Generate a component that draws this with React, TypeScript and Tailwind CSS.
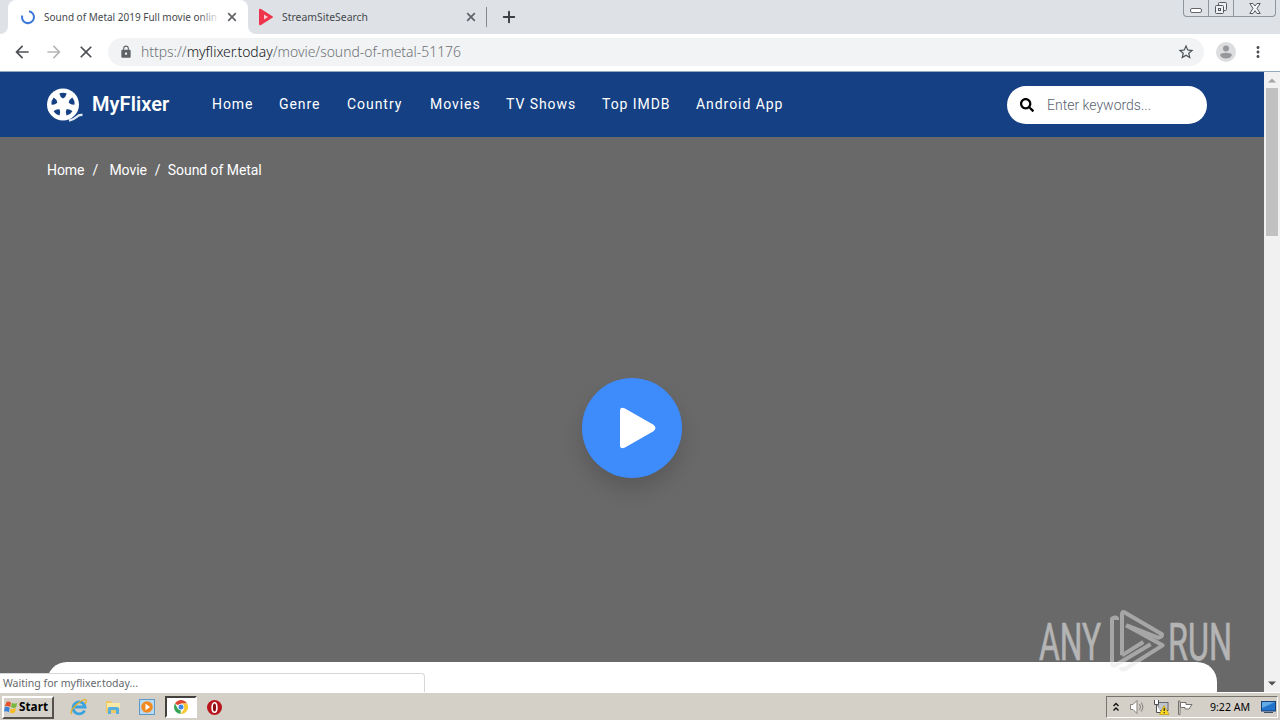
import type { ReactNode } from "react"
import { Plus } from "lucide-react"
import { FaSearch } from "react-icons/fa"
import { MdArrowBack, MdArrowForward, MdClose, MdLock, MdMoreVert, MdStarBorder } from "react-icons/md"

const navItems = [
    { label: "Home", width: "w-[67px]" },
    { label: "Genre", width: "w-[68px]" },
    { label: "Country", width: "w-[83px]" },
    { label: "Movies", width: "w-[76px]" },
    { label: "TV Shows", width: "w-[96px]" },
    { label: "Top IMDB", width: "w-[94px]" },
    { label: "Android App", width: "w-[100px]" }
]

function Label({ text, width, size, className = "" }: { text: string; width: number; size: number; className?: string }) {
    // Keeps system labels at a fixed advance width
    return (
        <svg width={width + 4} height="18" className={`shrink-0 overflow-visible ${className}`}>
            <text x="0" y="13" fontSize={size} textLength={width} lengthAdjust="spacingAndGlyphs" fill="currentColor">
                {text}
            </text>
        </svg>
    )
}

// Small bold cross on the tabs
function TabClose() {
    return (
        <svg width="14" height="14" viewBox="0 0 14 14" className="shrink-0">
            <path d="M3.2 3.2L10.8 10.8M10.8 3.2L3.2 10.8" stroke="#5f6368" strokeWidth="1.7" />
        </svg>
    )
}

function TabStrip() {
    return (
        <div className="flex h-[34px] bg-[#dee1e6]">
            <div className="w-2 h-full bg-white">
                <div className="size-full rounded-br-lg bg-[#dee1e6]"></div>
            </div>
            <div className="flex w-[240px] items-center rounded-t-lg bg-white pl-3">
                <svg width="16" height="16" viewBox="0 0 16 16" className="shrink-0">
                    <path d="M9 2.2A6 6 0 1 1 2.2 6.5" fill="none" stroke="#3c78d8" strokeWidth="2" />
                </svg>
                <div className="relative ml-2 w-[180px] text-[#45494d]">
                    <Label text="Sound of Metal 2019 Full movie onlin" width={173} size={11} />
                    <div className="absolute inset-y-0 right-[6px] w-5 bg-linear-to-r from-transparent to-white/90"></div>
                </div>
                <div className="ml-px">
                    <TabClose />
                </div>
            </div>
            <div className="h-full w-2 bg-white">
                <div className="size-full rounded-bl-lg bg-[#dee1e6]"></div>
            </div>
            <div className="flex w-[230px] items-center pl-[2px]">
                <svg width="16" height="18" viewBox="0 0 16 18">
                    <path d="M1 2Q1 0 3 1L14 8Q16 9 14 10L3 17Q1 18 1 16Z" fill="#ee344c" />
                    <path d="M6 6.5L10 9L6 11.5Z" fill="#ffc8ce" />
                </svg>
                <div className="ml-2 w-[182px] text-[#45494d]">
                    <Label text="StreamSiteSearch" width={86} size={11} />
                </div>
                <TabClose />
            </div>
            <div className="mt-[7px] h-5 w-px bg-[#85888c]"></div>
            <Plus className="mt-2 ml-[13px] size-[18px] text-[#3c4043]" strokeWidth={2.6} />
            <div className="mr-1 ml-auto flex h-[17px] w-[93px] rounded-b-[4px] border border-t-0 border-[#8f959c] text-[#55595f]">
                <div className="flex w-[25px] items-end justify-center border-r border-[#8f959c] pb-[3px]">
                    <div className="h-[5px] w-[12px] rounded-[2px] border border-[#63676d] bg-white"></div>
                </div>
                <div className="flex w-[25px] items-center justify-center border-r border-[#8f959c]">
                    <svg width="14" height="14" viewBox="0 0 14 14" fill="#eef0f3" stroke="currentColor">
                        <rect x="4.5" y="1.5" width="8" height="8" rx="1" />
                        <rect x="1.5" y="4.5" width="8" height="8" rx="1" />
                        <rect x="4.5" y="7.5" width="2" height="2" />
                    </svg>
                </div>
                <div className="flex flex-1 items-center justify-center">
                    <svg width="12" height="11" viewBox="0 0 12 11" fill="#f6f7f8" stroke="currentColor">
                        <path d="M.8.5H4L6 3L8 .5H11.2L8 5.4L11.2 10.5H8L6 7.7L4 10.5H.8L4 5.4Z" />
                    </svg>
                </div>
            </div>
        </div>
    )
}

function Toolbar() {
    return (
        <div className="flex h-[38px] items-center border-b border-[#93a9c2] bg-white pb-px">
            <MdArrowBack className="ml-3 size-5 text-[#4d5156]" />
            <MdArrowForward className="ml-3 size-5 text-[#b6b8ba]" />
            <MdClose className="ml-3 size-5 text-[#4d5156]" />
            <div className="ml-3 flex h-7 w-[1096px] items-center rounded-full bg-[#f1f3f4] pl-[11px]">
                <MdLock className="size-[14px] shrink-0 text-[#5f6368]" />
                <svg width="324" height="20" className="ml-2 shrink-0 overflow-visible">
                    <text x="0" y="15" fontSize="14" fontWeight="300" textLength="320" lengthAdjust="spacingAndGlyphs" fill="#6d7277">
                        https://<tspan fill="#15171a">myflixer.today</tspan>/movie/sound-of-metal-51176
                    </text>
                </svg>
                <MdStarBorder className="mr-[9px] ml-auto size-[18px] text-[#4d5156]" />
            </div>
            <svg width="20" height="20" viewBox="0 0 20 20" className="ml-3">
                <circle cx="10" cy="10" r="10" fill="#dcdddf" />
                <circle cx="10" cy="6.4" r="3" fill="#96989b" />
                <path d="M4 13Q5 10.8 10 10.8Q15 10.8 16 13Q14.5 16.6 10 16.6Q5.5 16.6 4 13Z" fill="#96989b" />
            </svg>
            <MdMoreVert className="ml-[13px] size-[18px] text-[#4d5156]" />
        </div>
    )
}

function ReelLogo() {
    const holes = [-90, -18, 54, 126, 198]
    return (
        <svg width="36" height="34" viewBox="0 0 36 34" className="shrink-0">
            <circle cx="16" cy="16.5" r="16" fill="#fff" />
            <path d="M22 32.5Q27 31.5 29.5 29T35.500 27" fill="none" stroke="#e4ebf5" strokeWidth="2.4" />
            {holes.map((angle) => (
                <path
                    key={angle}
                    d="M22 16.5Q23.5 13.5 27 12.8Q28.6 16.5 27 20.2Q23.5 19.5 22 16.5Z"
                    fill="#154184"
                    transform={`rotate(${angle} 16 16.5)`}
                />
            ))}
        </svg>
    )
}

function SiteHeader() {
    return (
        <header className="flex h-[65px] shrink-0 items-center bg-[#154184] pl-[47px] font-[Roboto,sans-serif] text-white">
            <ReelLogo />
            <span className="ml-[9px] w-[120px] pb-[2px] text-[20px] leading-none font-semibold tracking-[0.08px]">MyFlixer</span>
            <nav className="flex pb-[2px] text-[14px] leading-none tracking-[0.95px]">
                {navItems.map((item) => (
                    <a key={item.label} className={`${item.width} whitespace-nowrap`}>
                        {item.label}
                    </a>
                ))}
            </nav>
            <div className="mr-[57px] ml-auto flex h-[38px] w-[200px] items-center rounded-full bg-white pl-[13px]">
                <FaSearch className="size-[14px] text-black" />
                <span className="ml-[13px] pt-px text-[14px] font-light text-[#59636f]">Enter keywords...</span>
            </div>
        </header>
    )
}

function Scrollbar() {
    return (
        <div className="flex w-4 flex-col items-center bg-[#f1f1f1]">
            <svg width="16" height="16" viewBox="0 0 16 16">
                <path d="M4 10.5L8 6.5L12 10.5Z" fill="#a3a3a3" />
            </svg>
            <div className="h-[148px] w-3 bg-[#c1c1c1]"></div>
            <svg width="16" height="16" viewBox="0 0 16 16" className="mt-auto">
                <path d="M4 5.5L8 9.5L12 5.5Z" fill="#505050" />
            </svg>
        </div>
    )
}

function Watermark() {
    return (
        <svg width="196" height="76" viewBox="0 0 196 76" className="absolute top-[532px] left-[1037px] overflow-visible opacity-50">
            <g fill="#fff" stroke="#fff" strokeWidth=".6" fontFamily="Roboto, sans-serif" fontSize="52">
                <text x="2" y="56" textLength="62" lengthAdjust="spacingAndGlyphs">ANY</text>
                <text x="131" y="56" textLength="64" lengthAdjust="spacingAndGlyphs">RUN</text>
            </g>
            <g transform="translate(63 0) scale(.3333)" fill="none" stroke="#e4e4e4" strokeWidth="12" strokeLinejoin="round">
                <path d="M51 48V43Q46 38 36 44V179Q37 188 47 183L152 121" />
                <path d="M80 64L174 101Q188 99 186 91L73 25Q66 21 66 31V154" />
                <path d="M78 64L188 124L75 195Q66 200 61 190M66 154L130 114" />
            </g>
        </svg>
    )
}

function TaskButton({ children }: { children: ReactNode }) {
    return <div className="flex w-[34px] items-center justify-center">{children}</div>
}

function WindowsLogo() {
    return (
        <svg width="16" height="15" viewBox="0 0 16 15">
            <path d="M3 1Q6 0 8 2L7 7Q4 5 1 6Z" fill="#e6532b" />
            <path d="M9 2Q12 4 15 2L14 7Q11 9 8 7Z" fill="#78b83c" />
            <path d="M1 7Q4 6 6.5 8L5.5 13Q3 11 0 12Z" fill="#3b83d4" />
            <path d="M7.8 8.5Q11 10 13.8 8L12.5 13Q9.5 15 6.8 13Z" fill="#f7bb22" />
        </svg>
    )
}

function Taskbar() {
    return (
        <footer className="flex h-[28px] items-center border-t border-white bg-[#d4d0c8] pt-px">
            <div className="ml-[2px] flex h-[23px] w-[52px] items-center border-2 border-t-white border-r-[#55524e] border-b-[#55524e] border-l-white">
                <WindowsLogo />
                <Label text="Start" width={29} size={12} className="ml-px font-bold text-black" />
            </div>
            <div className="ml-2 flex">
                <TaskButton>
                    <svg width="18" height="18" viewBox="0 0 18 18" fill="none">
                        <path d="M14.5 12.5A6 6 0 1 1 15 9H5" stroke="#3aa2df" strokeWidth="2.8" />
                        <path d="M2 16Q-1 14 6 7Q14 0 16 2Q17 3 15 6" stroke="#e5ae27" strokeWidth="1.3" />
                    </svg>
                </TaskButton>
                <TaskButton>
                    <svg width="16" height="16" viewBox="0 0 16 16">
                        <path d="M1 2H6L7 4H14V14H1Z" fill="#edc964" />
                        <path d="M2 4H15V9H2Z" fill="#f9e9a5" />
                        <path d="M3 15V9Q3 8 5 8H12Q14 8 14 10V15H11V11H6V15Z" fill="#57afe0" />
                    </svg>
                </TaskButton>
                <TaskButton>
                    <svg width="16" height="16" viewBox="0 0 16 16">
                        <rect x=".5" y=".5" width="15" height="15" fill="#b9daf2" stroke="#5b99c9" />
                        <circle cx="8" cy="8" r="5.8" fill="#f18a20" />
                        <path d="M6.5 4.8L11 8L6.5 11.2Z" fill="#fff" />
                    </svg>
                </TaskButton>
                <div className="ml-px flex h-[22px] w-8 items-center justify-center border-2 border-t-[#44413d] border-r-white border-b-white border-l-[#44413d] bg-white">
                    <svg width="14" height="14" viewBox="0 0 14 14">
                        <path d="M7 7L1 3.5A7 7 0 0 1 13.1 3.5H7Z" fill="#df4735" />
                        <path d="M7 7L6.5 14A7 7 0 0 1 1 3.5L4 9Z" fill="#36a455" />
                        <path d="M7 7V3.5H13.1A7 7 0 0 1 6.5 14L10 9Z" fill="#f8c934" />
                        <circle cx="7" cy="7" r="3.2" fill="#fff" />
                        <circle cx="7" cy="7" r="2.5" fill="#4285e8" />
                    </svg>
                </div>
                <TaskButton>
                    <svg width="15" height="15" viewBox="0 0 15 15">
                        <circle cx="7.5" cy="7.5" r="7.5" fill="#b8151c" />
                        <ellipse cx="7.5" cy="7.5" rx="2.4" ry="4.8" fill="#8b0c12" stroke="#fff" strokeWidth="1.6" />
                    </svg>
                </TaskButton>
            </div>
            <div className="mr-[2px] ml-auto flex h-[22px] w-[172px] items-center border border-t-[#77736d] border-r-white border-b-white border-l-[#77736d] text-black">
                <svg width="8" height="10" viewBox="0 0 8 10" className="ml-[5px]" fill="none" stroke="#111" strokeWidth="1.4">
                    <path d="M1.5 4L4 1.5L6.5 4M1.5 8.5L4 6L6.5 8.5" />
                </svg>
                <svg width="17" height="16" viewBox="0 0 17 16" className="ml-[9px]" fill="none" stroke="#85817b">
                    <path d="M1.5 5.5H4L8 1.5V14.5L4 10.5H1.5Z" fill="#fff" />
                    <path d="M10.5 5Q12.5 8 10.5 11M12.5 3.5Q15.5 8 12.5 12.5" />
                </svg>
                <svg width="17" height="17" viewBox="0 0 17 17" className="ml-[7px]">
                    <rect x="5" y="3.5" width="10" height="8" fill="#bfc5ce" stroke="#66696c" />
                    <path d="M1.5 1V5.5H5.5V1M3.5 5.5V13.5H8" fill="#fff" stroke="#4e5053" />
                    <path d="M11 6.5L16 15.5H6.5Z" fill="#ffdc22" stroke="#ba9611" strokeWidth=".7" />
                    <path d="M11.2 9V12M11.2 13V14.2" stroke="#222" strokeWidth="1.2" />
                </svg>
                <svg width="17" height="15" viewBox="0 0 17 15" className="ml-[7px]" stroke="#75716c">
                    <path d="M1.5 1V14.5H3V1Z" fill="#fff" />
                    <path d="M3.5 2.5H9V4.5H15L12 9H8V7.5H3.5Z" fill="#fff" />
                </svg>
                <Label text="9:22 AM" width={40} size={11} className="ml-4" />
                <svg width="16" height="14" viewBox="0 0 16 14" className="ml-[7px] shrink-0">
                    <rect x=".5" y="1.5" width="14" height="9.5" fill="#2273c9" stroke="#173f78" />
                    <path d="M1 2H14L1 8Z" fill="#62abe7" />
                    <path d="M3 12.5H12" stroke="#3c5066" />
                </svg>
            </div>
        </footer>
    )
}

export default function App() {
    return (
        <div className="flex h-[720px] w-[1280px] flex-col overflow-hidden bg-white font-['Noto_Sans',sans-serif]">
            <TabStrip />
            <Toolbar />
            <div className="relative flex h-[620px] overflow-hidden">
                <main className="flex w-[1264px] flex-col bg-[#696969]">
                    <SiteHeader />
                    <div className="mt-[23px] ml-[47px] flex h-5 items-center font-[Roboto,sans-serif] text-[14px] tracking-[-0.06px] text-white">
                        <span>Home</span>
                        <span className="ml-2 w-[17px]">/</span>
                        <span>Movie</span>
                        <span className="ml-2 w-[13px]">/</span>
                        <span>Sound of Metal</span>
                    </div>
                    <button className="mt-[198px] flex size-[100px] shrink-0 items-center justify-center self-center rounded-full bg-[#3e8bfb] shadow-[0_12px_20px_rgba(0,0,0,0.14)]">
                        <svg width="38" height="42" viewBox="0 0 38 42" className="ml-3">
                            <path d="M1 4Q1 -1 6 1.5L34 17.5Q39 21 34 24.5L6 40.5Q1 43 1 38Z" fill="#fff" />
                        </svg>
                    </button>
                    <div className="mr-[47px] ml-[47px] mt-[184px] h-[30px] shrink-0 rounded-t-[20px] bg-white"></div>
                </main>
                <Scrollbar />
                <Watermark />
                <div className="absolute bottom-0 left-0 flex h-[19px] w-[425px] items-center rounded-tr border-t border-r border-[#d5d7da] bg-white pl-[3px] text-[#66696d]">
                    <Label text="Waiting for myflixer.today..." width={135} size={11} />
                </div>
            </div>
            <Taskbar />
        </div>
    )
}
